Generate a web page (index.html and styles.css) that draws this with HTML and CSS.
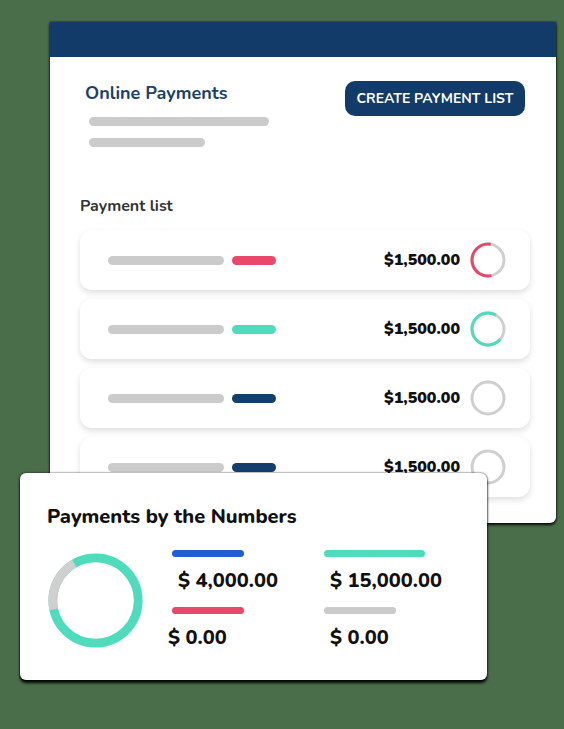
FILE: index.html
```html
<!DOCTYPE html>
<html>
<head>
<meta charset="utf-8">
<link rel="stylesheet" href="styles.css">
</head>
<body>
<div class="stage">
  <div class="main-card">
    <div class="main-head"></div>
    <div class="main-body">
      <div class="top">
        <div class="intro">
          <div class="title">Online Payments</div>
          <div class="bar gray w180"></div>
          <div class="bar gray w116"></div>
        </div>
        <button class="btn">CREATE PAYMENT LIST</button>
      </div>
      <div class="list-label">Payment list</div>
      <div class="rows">
        <div class="row">
          <div class="bars"><span class="bar gray w116"></span><span class="bar red w44"></span></div>
          <div class="amount">$1,500.00</div>
          <svg class="ring" viewBox="0 0 36 36"><circle cx="18" cy="18" r="16" fill="none" stroke="#cfcfcf" stroke-width="3"/><circle cx="18" cy="18" r="16" fill="none" stroke="#e8486a" stroke-width="3" pathLength="100" stroke-dasharray="56 100" transform="rotate(78 18 18)" /></svg>
        </div>
        <div class="row">
          <div class="bars"><span class="bar gray w116"></span><span class="bar teal w44"></span></div>
          <div class="amount">$1,500.00</div>
          <svg class="ring" viewBox="0 0 36 36"><circle cx="18" cy="18" r="16" fill="none" stroke="#cfcfcf" stroke-width="3"/><circle cx="18" cy="18" r="16" fill="none" stroke="#4fdcbd" stroke-width="3" pathLength="100" stroke-dasharray="72 100" transform="rotate(40 18 18)" /></svg>
        </div>
        <div class="row">
          <div class="bars"><span class="bar gray w116"></span><span class="bar navy w44"></span></div>
          <div class="amount">$1,500.00</div>
          <svg class="ring" viewBox="0 0 36 36"><circle cx="18" cy="18" r="16" fill="none" stroke="#cfcfcf" stroke-width="3"/></svg>
        </div>
        <div class="row">
          <div class="bars"><span class="bar gray w116"></span><span class="bar navy w44"></span></div>
          <div class="amount">$1,500.00</div>
          <svg class="ring" viewBox="0 0 36 36"><circle cx="18" cy="18" r="16" fill="none" stroke="#cfcfcf" stroke-width="3"/></svg>
        </div>
      </div>
    </div>
  </div>

  <div class="numbers-card">
    <div class="numbers-title">Payments by the Numbers</div>
    <div class="numbers-body">
      <svg class="donut" viewBox="0 0 100 100"><circle cx="50" cy="50" r="44" fill="none" stroke="#4fdcbd" stroke-width="9"/><circle cx="50" cy="50" r="44" fill="none" stroke="#cfcfcf" stroke-width="9" pathLength="100" stroke-dasharray="20 100" transform="rotate(168 50 50)"/></svg>
      <div class="legend">
        <div class="item"><span class="lbar blue w72"></span><span class="val ind">$ 4,000.00</span></div>
        <div class="item"><span class="lbar teal w101"></span><span class="val ind">$ 15,000.00</span></div>
        <div class="item"><span class="lbar red w72"></span><span class="val neg">$ 0.00</span></div>
        <div class="item"><span class="lbar gray w72"></span><span class="val ind">$ 0.00</span></div>
      </div>
    </div>
  </div>
</div>
</body>
</html>
```
FILE: styles.css
```css
* { box-sizing: border-box; }
html, body { margin: 0; padding: 0; }
body {
  background: #4a6d4a;
  width: 564px;
  height: 729px;
  overflow: hidden;
  font-family: "Nunito", "Lato", "Open Sans", sans-serif;
}
.stage { position: relative; width: 564px; height: 729px; padding: 22px 0 0 50px; }

.main-card {
  width: 506px;
  height: 501px;
  background: #fff;
  border-radius: 0 0 6px 6px;
  box-shadow: 0 2px 3px rgba(0,0,0,0.9), 0 0 2px rgba(0,0,0,0.9);
  overflow: hidden;
}
.main-head { height: 35px; background: #133b69; }
.main-body { padding: 24px 26px 0 30px; }

.top { display: flex; justify-content: space-between; align-items: flex-start; }
.intro { padding-left: 5px; display: flex; flex-direction: column; }
.title { font-size: 18px; font-weight: 700; color: #1b3f6e; line-height: 24px; margin-bottom: 12px; }
.intro .bar { margin-left: 4px; margin-bottom: 12px; }

.bar { display: block; height: 9px; border-radius: 5px; }
.gray { background: #cbcbcb; }
.red { background: #e9486a; }
.teal { background: #4fdcbd; }
.navy { background: #143e6b; }
.blue { background: #1f5fd3; }
.w180 { width: 180px; }
.w116 { width: 116px; }
.w44 { width: 44px; }

.btn {
  margin-top: 0px;
  margin-right: 5px;
  height: 35px;
  width: 180px;
  border: none;
  border-radius: 10px;
  background: #133b69;
  color: #fff;
  font-family: inherit;
  font-size: 14px;
  font-weight: 700;
  letter-spacing: 0px;
}

.list-label { margin-top: 37px; font-size: 16px; font-weight: 700; color: #333; line-height: 20px; }

.rows { margin-top: 14px; display: flex; flex-direction: column; gap: 9px; }
.row {
  height: 60px;
  border-radius: 12px;
  background: #fff;
  box-shadow: 0 3px 6px rgba(0,0,0,0.13);
  display: flex;
  align-items: center;
  padding: 0 24px 0 28px;
}
.bars { display: flex; gap: 8px; flex: 1; }
.amount { font-size: 16px; font-weight: 900; color: #111; margin-right: 10px; }
.ring { width: 36px; height: 36px; }

.numbers-card {
  position: absolute;
  left: 20px;
  top: 473px;
  width: 467px;
  height: 207px;
  background: #fff;
  border-radius: 6px;
  box-shadow: 0 3px 3px rgba(0,0,0,0.95), 0 0 2px rgba(0,0,0,0.9);
  padding: 32px 0 0 27px;
}
.numbers-title { font-size: 20px; font-weight: 800; color: #111; line-height: 24px; }
.numbers-body { display: flex; margin-top: 16px; }
.donut { width: 97px; height: 97px; margin-top: 7px; }
.legend {
  margin-left: 28px;
  margin-top: 5px;
  display: grid;
  grid-template-columns: 152px 150px;
  row-gap: 14px;
}
.item { display: flex; flex-direction: column; }
.lbar { display: block; height: 7px; border-radius: 4px; }
.w72 { width: 72px; }
.w101 { width: 101px; }
.val { font-size: 20px; font-weight: 800; color: #111; line-height: 24px; margin-top: 12px; }
.ind { padding-left: 6px; }
.neg { margin-left: -4px; }
```
